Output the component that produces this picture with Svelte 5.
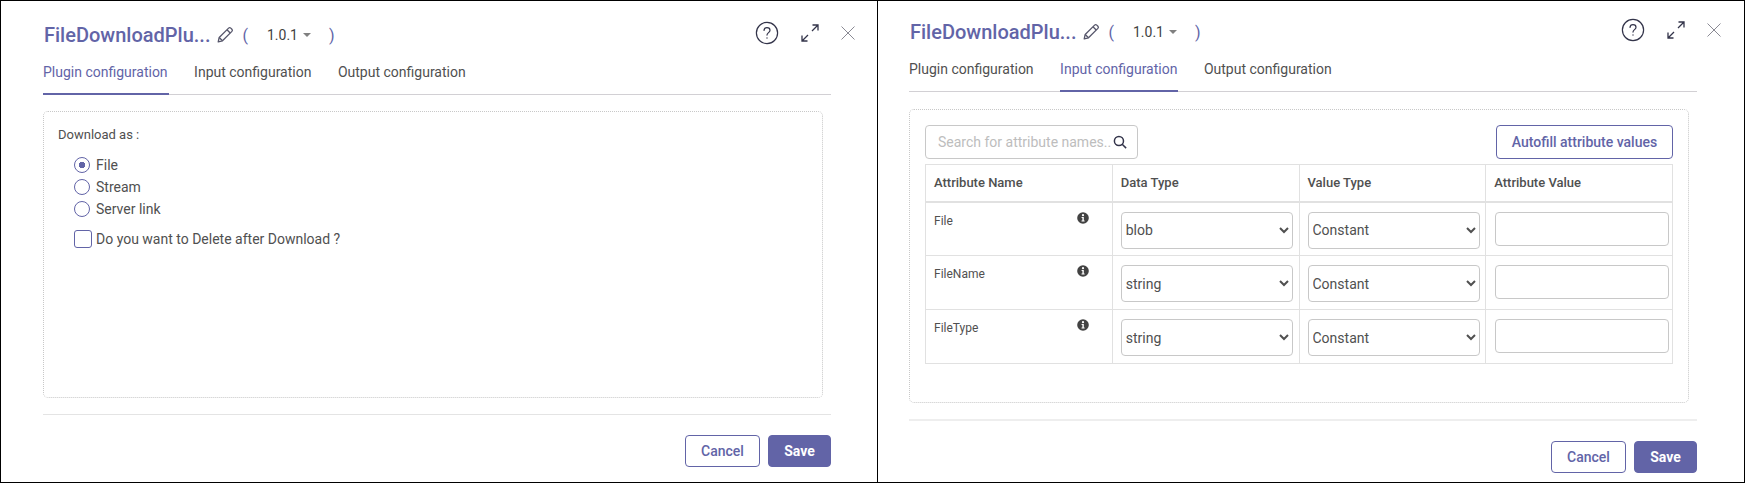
<script lang="ts">
    const tabs = ['Plugin configuration', 'Input configuration', 'Output configuration'];
    const rows = [
        { name: 'File', type: 'blob' },
        { name: 'FileName', type: 'string' },
        { name: 'FileType', type: 'string' }
    ];
    const dataTypes = ['blob', 'string', 'number', 'boolean'];
    const downloadOptions = ['File', 'Stream', 'Server link'];
</script>

{#snippet head(active: number)}
    <div class="head">
        <span class="title">FileDownloadPlu...</span>
        <svg class="pencil" width="18" height="18" viewBox="0 0 18 18" fill="none" stroke="#55556a" stroke-width="1.3" stroke-linejoin="round">
            <path d="M2.2 15.8l1-4.3L12.6 2.1a1.6 1.6 0 0 1 2.2 0l1.1 1.1a1.6 1.6 0 0 1 0 2.2L6.5 14.8z" />
            <path d="M11 3.8l3.2 3.2M3.2 11.5l3.3 3.3" />
        </svg>
        <span class="paren first">(</span>
        <span class="version">1.0.1</span>
        <span class="caret"></span>
        <span class="paren last">)</span>
        <div class="actions">
            <svg class="help" width="24" height="24" viewBox="0 0 24 24" fill="none" stroke="#33344a" stroke-width="1.2">
                <circle cx="12" cy="12" r="10.6" />
                <path d="M9 9.4a3 3 0 0 1 3-2.8c1.8 0 3 1.100 3 2.600 0 2.300-3 2.500-3 4.900" stroke-linecap="round" />
                <circle cx="12" cy="17" r="0.7" fill="#33344a" stroke="none" />
            </svg>
            <svg class="expand" width="20" height="20" viewBox="0 0 20 20" fill="none" stroke="#33344a" stroke-width="1.300">
                <path d="M12.500 2h5.500v5.500M18 2l-6 6" />
                <path d="M7.500 18H2v-5.500M2 18l6-6" />
            </svg>
            <svg class="close" width="14" height="14" viewBox="0 0 14 14" fill="none" stroke="#8a8a94" stroke-width="1">
                <path d="M0.500 0.500l13 13M13.500 0.500l-13 13" />
            </svg>
        </div>
    </div>
    <div class="tabs">
        {#each tabs as tab, i}
            <span class="tab" class:active={i === active}>{tab}</span>
        {/each}
    </div>
{/snippet}

{#snippet foot()}
    <div class="foot">
        <button class="btn cancel">Cancel</button>
        <button class="btn save">Save</button>
    </div>
{/snippet}

<div class="screen">
    <section class="panel plugin">
        {@render head(0)}
        <div class="box">
            <p class="legend">Download as :</p>
            <div class="options">
                {#each downloadOptions as option, i}
                    <label class="radio">
                        <input type="radio" name="download" checked={i === 0} />
                        {option}
                    </label>
                {/each}
                <label class="check">
                    <input type="checkbox" />
                    Do you want to Delete after Download ?
                </label>
            </div>
        </div>
        {@render foot()}
    </section>

    <section class="panel input">
        {@render head(1)}
        <div class="box">
            <div class="toolbar">
                <div class="search">
                    <input type="text" placeholder="Search for attribute names.." />
                    <svg width="14" height="14" viewBox="0 0 16 16" fill="none" stroke="#33344a" stroke-width="1.700">
                        <circle cx="6.800" cy="6.800" r="5.200" />
                        <path d="M10.500 10.500l4.500 4.500" />
                    </svg>
                </div>
                <button class="btn autofill">Autofill attribute values</button>
            </div>
            <table>
                <thead>
                    <tr>
                        <th>Attribute Name</th>
                        <th>Data Type</th>
                        <th>Value Type</th>
                        <th>Attribute Value</th>
                    </tr>
                </thead>
                <tbody>
                    {#each rows as row}
                        <tr>
                            <td>
                                <div class="attr">
                                    <span>{row.name}</span>
                                    <svg width="12" height="12" viewBox="0 0 12 12">
                                        <circle cx="6" cy="6" r="5.800" fill="#424242" />
                                        <circle cx="6" cy="3.200" r="1.100" fill="#fff" />
                                        <path d="M4.600 5h2.200v3.600h0.800v1H4.500v-1h0.900V6h-0.800z" fill="#fff" />
                                    </svg>
                                </div>
                            </td>
                            <td>
                                <select value={row.type}>
                                    {#each dataTypes as t}
                                        <option value={t}>{t}</option>
                                    {/each}
                                </select>
                            </td>
                            <td>
                                <select>
                                    <option>Constant</option>
                                    <option>Variable</option>
                                </select>
                            </td>
                            <td class="value-cell"><input class="value" type="text" /></td>
                        </tr>
                    {/each}
                </tbody>
            </table>
        </div>
        {@render foot()}
    </section>
</div>

<style>
    :global(body) {
        font-family: Roboto, 'Liberation Sans', sans-serif;
        background: #fff;
        color: #505050;
    }

    .screen {
        display: flex;
        width: 1745px;
        height: 483px;
        box-sizing: border-box;
        border: 1px solid #000;
    }

    .panel {
        box-sizing: border-box;
    }

    .plugin {
        width: 877px;
        border-right: 1px solid #000;
        padding: 12px 46px 0 42px;
    }

    .input {
        flex: 1;
        padding: 9px 47px 0 31px;
    }

    .head {
        display: flex;
        align-items: center;
        height: 44px;
        margin-right: -24px;
    }

    .title {
        font-size: 20px;
        font-weight: 500;
        color: #6264a7;
        margin-left: 1px;
    }

    .pencil {
        margin-left: 6px;
    }

    .paren {
        font-size: 16px;
        color: #6264a7;
    }

    .paren.first {
        margin-left: 8px;
    }

    .paren.last {
        margin-left: 18px;
    }

    .version {
        font-size: 14px;
        margin-left: 19px;
        color: #424242;
    }

    .caret {
        width: 0;
        height: 0;
        margin-left: 5px;
        border-left: 4px solid transparent;
        border-right: 4px solid transparent;
        border-top: 4px solid #808080;
    }

    .actions {
        display: flex;
        align-items: center;
        margin: 0 0 4px auto;
        gap: 21px;
    }

    .tabs {
        display: flex;
        gap: 25.500px;
        height: 38px;
        box-sizing: border-box;
        border-bottom: 1px solid #d2d0d4;
    }

    .tab {
        box-sizing: border-box;
        height: 38px;
        padding: 7px 1px 0 0;
        font-size: 14px;
        line-height: 16px;
    }

    .tab.active {
        color: #6264a7;
        border-bottom: 2px solid #6264a7;
    }

    .box {
        box-sizing: border-box;
        margin-right: 8px;
        border: 1px dotted #c8c8c8;
        border-radius: 5px;
    }

    .plugin .box {
        height: 287px;
        margin-top: 16px;
        padding: 15px 14px;
    }

    .input .box {
        height: 294px;
        margin-top: 17px;
        padding: 15px;
    }

    .legend {
        margin: 0;
        font-size: 13px;
        line-height: 16px;
    }

    .options {
        display: flex;
        flex-direction: column;
        margin: 11px 0 0 16px;
        font-size: 14px;
    }

    .radio,
    .check {
        display: flex;
        align-items: center;
        gap: 6px;
    }

    .radio {
        height: 22px;
    }

    .check {
        margin-top: 10px;
        height: 18px;
    }

    .radio input {
        appearance: none;
        box-sizing: border-box;
        width: 16px;
        height: 16px;
        margin: 0;
        border: 1px solid #6264a7;
        border-radius: 50%;
    }

    .radio input:checked {
        background: radial-gradient(circle, #6264a7 3px, #fff 3.5px);
    }

    .check input {
        appearance: none;
        box-sizing: border-box;
        width: 18px;
        height: 18px;
        margin: 0 -2px 0 0;
        border: 1px solid #6264a7;
        border-radius: 3px;
    }

    .toolbar {
        display: flex;
        justify-content: space-between;
        height: 34px;
        margin-bottom: 5px;
    }

    .search {
        display: flex;
        align-items: center;
        gap: 2px;
        box-sizing: border-box;
        width: 213px;
        padding: 0 10px 0 12px;
        border: 1px solid #c8c8c8;
        border-radius: 4px;
    }

    .search input {
        flex: 1;
        min-width: 0;
        border: none;
        outline: none;
        padding: 0;
        font: 14px Roboto, sans-serif;
    }

    .search input::placeholder {
        color: #bdbdbd;
    }

    .btn {
        box-sizing: border-box;
        border: 1px solid #6264a7;
        border-radius: 4px;
        font-family: inherit;
        font-size: 14px;
        font-weight: 500;
        color: #6264a7;
        background: #fff;
    }

    .autofill {
        width: 177px;
        padding: 0;
    }

    table {
        width: 748px;
        table-layout: fixed;
        border-collapse: collapse;
        font-size: 12px;
    }

    th,
    td {
        box-sizing: border-box;
        border: 1px solid #e1e1e1;
        padding: 0;
        text-align: left;
        vertical-align: top;
    }

    th {
        height: 37px;
        padding-left: 8px;
        border-bottom-width: 2px;
        font-size: 13px;
        font-weight: 500;
        vertical-align: middle;
    }

    td {
        height: 54px;
        padding: 9px 4px 0 8px;
    }

    td.value-cell {
        padding: 9px 2px 0 9px;
    }

    .attr {
        display: flex;
        justify-content: space-between;
        align-items: flex-start;
        padding-right: 19px;
        line-height: 16px;
    }

    .attr span {
        padding-top: 1px;
    }

    select {
        display: block;
        box-sizing: border-box;
        width: 172px;
        height: 37px;
        padding: 0;
        border: 1px solid #c8c8c8;
        border-radius: 4px;
        background: #fff;
        font: 14px Roboto, sans-serif;
        color: #505050;
    }

    .value {
        display: block;
        box-sizing: border-box;
        width: 174px;
        height: 34px;
        border: 1px solid #c8c8c8;
        border-radius: 4px;
    }

    .foot {
        display: flex;
        justify-content: flex-end;
        gap: 8px;
        margin-top: 16px;
        padding-top: 20px;
        border-top: 1px solid #e4e4e4;
    }

    .input .foot {
        border-top: 2px solid #eeeeee;
    }

    .cancel,
    .save {
        height: 32px;
    }

    .cancel {
        width: 75px;
    }

    .save {
        width: 63px;
        background: #6264a7;
        color: #fff;
        font-weight: 700;
    }
</style>
